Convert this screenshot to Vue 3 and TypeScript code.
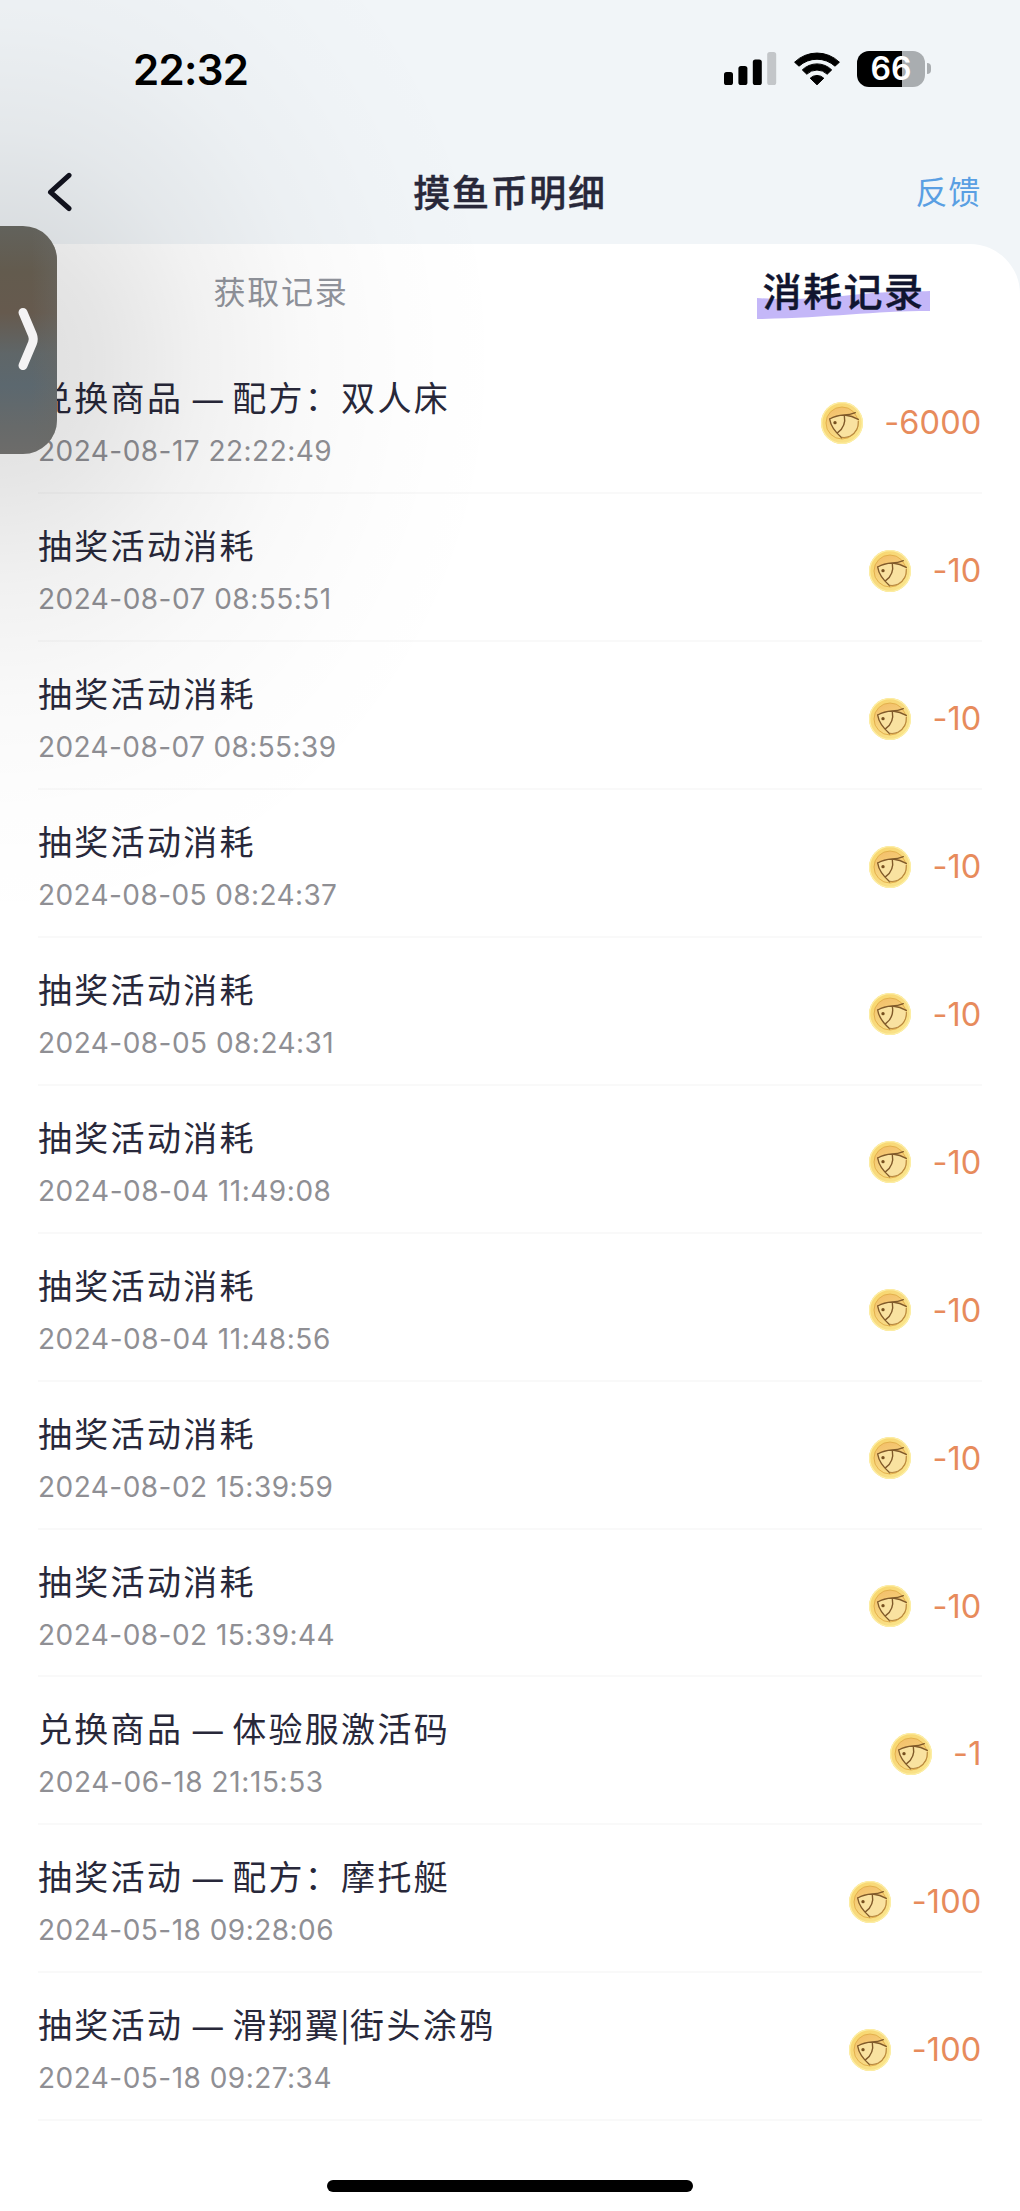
<script setup lang="ts">
interface Part {
  text: string
  kind: 'text' | 'dash' | 'bar'
}
interface Entry {
  parts: Part[]
  time: string
  tracking: string
  amount: string
}

const split = (title: string): Part[] =>
  title
    .split(/( — |\|)/)
    .map((text) => ({ text, kind: text === ' — ' ? 'dash' : text === '|' ? 'bar' : 'text' }))

// Narrow "1" glyphs get a little more tracking so the timestamps keep an even width.
const tracking = (time: string): string =>
  `${(0.4 + 0.07 * (time.split('1').length - 1)).toFixed(2)}px`

const entry = (title: string, time: string, amount: string): Entry => ({
  parts: split(title),
  time,
  tracking: tracking(time),
  amount,
})

const entries: Entry[] = [
  entry('兑换商品 — 配方：双人床', '2024-08-17 22:22:49', '-6000'),
  entry('抽奖活动消耗', '2024-08-07 08:55:51', '-10'),
  entry('抽奖活动消耗', '2024-08-07 08:55:39', '-10'),
  entry('抽奖活动消耗', '2024-08-05 08:24:37', '-10'),
  entry('抽奖活动消耗', '2024-08-05 08:24:31', '-10'),
  entry('抽奖活动消耗', '2024-08-04 11:49:08', '-10'),
  entry('抽奖活动消耗', '2024-08-04 11:48:56', '-10'),
  entry('抽奖活动消耗', '2024-08-02 15:39:59', '-10'),
  entry('抽奖活动消耗', '2024-08-02 15:39:44', '-10'),
  entry('兑换商品 — 体验服激活码', '2024-06-18 21:15:53', '-1'),
  entry('抽奖活动 — 配方：摩托艇', '2024-05-18 09:28:06', '-100'),
  entry('抽奖活动 — 滑翔翼|街头涂鸦', '2024-05-18 09:27:34', '-100'),
]
</script>

<template>
  <div class="screen">
    <header class="status">
      <span class="clock">22:32</span>
      <div class="indicators">
        <svg class="signal" width="53" height="34" viewBox="0 0 53 34">
          <rect x="0" y="20" width="9" height="13" rx="2.6" />
          <rect x="14.4" y="14" width="9" height="19" rx="2.6" />
          <rect x="28.8" y="7.5" width="9" height="25.5" rx="2.6" />
          <rect x="43.2" y="0" width="9" height="33" rx="2.6" fill="#c3c6c9" />
        </svg>
        <svg class="wifi" width="46" height="34" viewBox="0 0 46 34">
          <path d="M0.600 10.200A32 32 0 0 1 45.400 10.200L41 14.200A26.700 26.700 0 0 0 5 14.200Z" stroke="#000" stroke-width="1" stroke-linejoin="round" />
          <path d="M8.300 17.900A21 21 0 0 1 37.700 17.900L33.200 22.200A14.600 14.600 0 0 0 12.800 22.200Z" stroke="#000" stroke-width="1" stroke-linejoin="round" />
          <path d="M16.200 26.200A9.800 9.800 0 0 1 29.800 26.200L23 32.800Z" stroke="#000" stroke-width="1" stroke-linejoin="round" />
        </svg>
        <div class="battery">
          <div class="cell">66</div>
          <i class="nub"></i>
        </div>
      </div>
    </header>

    <nav class="nav">
      <svg class="back" width="26" height="42" viewBox="0 0 26 42">
        <path d="M23 4.300 4.500 21.200 23 37.500" fill="none" stroke="#12131f" stroke-width="5" stroke-linecap="round" stroke-linejoin="round" />
      </svg>
      <h1 class="heading">摸鱼币明细</h1>
      <a class="feedback">反馈</a>
    </nav>

    <main class="panel">
      <div class="tabs">
        <div class="tab"><span>获取记录</span></div>
        <div class="tab active">
          <span class="label">
            <svg class="marker" width="173" height="30" viewBox="0 0 173 30">
              <path d="M0 8C40 11 75 7 105 4S150 2 173 1V21C115 21 70 28 0 29Z" fill="#c4b7f8" />
            </svg>
            <span class="word">消耗记录</span>
          </span>
        </div>
      </div>

      <ul class="list">
        <li v-for="(item, i) in entries" :key="i" class="row">
          <div class="info">
            <p class="title"><span v-for="(part, n) in item.parts" :key="n" :class="part.kind">{{ part.text }}</span></p>
            <p class="time" :style="{ letterSpacing: item.tracking }">{{ item.time }}</p>
          </div>
          <div class="cost">
            <svg class="coin" width="44" height="44" viewBox="0 0 132 132">
              <defs>
                <linearGradient id="rim" x1="0" y1="0" x2="1" y2="1">
                  <stop offset="0" stop-color="#f9d769" />
                  <stop offset="0.5" stop-color="#f8da80" />
                  <stop offset="1" stop-color="#fbe88c" />
                </linearGradient>
                <linearGradient id="face" x1="0" y1="0" x2="0.3" y2="1">
                  <stop offset="0" stop-color="#f3bd68" />
                  <stop offset="1" stop-color="#f8dc86" />
                </linearGradient>
              </defs>
              <circle cx="66" cy="66" r="63" fill="url(#rim)" />
              <circle cx="66" cy="66" r="61" fill="none" stroke="#fdefa6" stroke-width="4" />
              <circle cx="66" cy="66" r="48" fill="url(#face)" stroke="#e3b04c" stroke-width="3" />
              <path d="M29 54Q50 43 72 43Q98 42 114 58Q116 88 90 106Q77 112 62 108Q34 80 29 54Z" fill="#f9e2a0" />
              <path d="M29 54Q48 43 72 42Q90 42 106 35M74 42Q96 44 115 55M29 54Q33 82 65 110M73 43Q79 76 53 95" fill="none" stroke="#805a2a" stroke-width="4.200" stroke-linecap="round" stroke-linejoin="round" />
              <path d="M115 60Q117 90 91 105Q78 111 66 109" fill="none" stroke="#b98a42" stroke-width="3.500" stroke-linecap="round" />
              <circle cx="45" cy="65" r="5" fill="#76501f" />
            </svg>
            <span class="amount">{{ item.amount }}</span>
          </div>
        </li>
      </ul>
    </main>

    <div class="shade"></div>
    <div class="drawer">
      <svg width="24" height="68" viewBox="0 0 24 68">
        <path d="M6 6.500 15.500 29Q17 33 15.500 37L6 59.500" fill="none" stroke="#f4f3f4" stroke-width="9" stroke-linecap="round" stroke-linejoin="round" />
      </svg>
    </div>
    <div class="home"></div>
  </div>
</template>

<style>
body {
  margin: 0;
}
</style>

<style scoped>
.screen {
  position: relative;
  width: 1020px;
  height: 2211px;
  overflow: hidden;
  background: #f1f5f8;
  font-family: Inter, 'Noto Sans CJK SC', sans-serif;
  color: #28283a;
}
.status {
  display: flex;
  justify-content: space-between;
  align-items: center;
  height: 137px;
  padding: 0 89px 0 133px;
  box-sizing: border-box;
}
.clock {
  font-size: 42px;
  font-weight: 600;
  letter-spacing: -0.700px;
  color: #000;
  padding-top: 1px;
}
.indicators {
  display: flex;
  align-items: center;
}
.signal {
  margin-right: 17px;
}
.wifi {
  margin-right: 17px;
}
.battery {
  display: flex;
  align-items: center;
  gap: 2px;
}
.cell {
  width: 68px;
  height: 36px;
  border-radius: 12px;
  background: linear-gradient(90deg, #000 0 44.500px, #a9adb0 44.500px);
  color: #fff;
  font-size: 32px;
  font-weight: 600;
  line-height: 36px;
  text-align: center;
}
.nub {
  width: 4px;
  height: 11px;
  border-radius: 0 5px 5px 0;
  background: #a9adb0;
}
.nav {
  display: grid;
  grid-template-columns: 200px 1fr 200px;
  align-items: center;
  height: 107px;
  padding: 2px 39px 0 46px;
  box-sizing: border-box;
}
.heading {
  margin: 0 7px 0 0;
  padding-top: 4px;
  text-align: center;
  font-size: 37px;
  font-weight: 500;
  letter-spacing: 1.700px;
  line-height: 50px;
  -webkit-text-stroke: 0.400px currentColor;
}
.feedback {
  padding-bottom: 3px;
  text-align: right;
  font-size: 32px;
  letter-spacing: 0.700px;
  color: #5a9fe3;
}
.panel {
  height: 1967px;
  background: #fff;
  border-radius: 0 50px 0 0;
}
.tabs {
  display: grid;
  grid-template-columns: 562px 1fr;
  height: 102.400px;
}
.tab {
  height: 92px;
  display: flex;
  align-items: center;
  justify-content: center;
  font-size: 32px;
  letter-spacing: 1.700px;
  color: #91949c;
}
.active {
  height: 90px;
  padding-left: 105px;
  font-size: 39px;
  font-weight: 500;
  letter-spacing: 1.500px;
  color: #101530;
  -webkit-text-stroke: 0.400px currentColor;
}
.label {
  position: relative;
}
.marker {
  position: absolute;
  left: -5px;
  bottom: -3px;
}
.word {
  position: relative;
}
.list {
  margin: 0;
  padding: 0 38px;
  list-style: none;
}
.row {
  display: flex;
  justify-content: space-between;
  height: 147.900px;
  box-sizing: border-box;
  border-bottom: 2px solid rgba(30, 30, 50, 0.026);
}
.info {
  padding-top: 28px;
}
.title {
  height: 50px;
  margin: 0;
  font-size: 34px;
  line-height: 50px;
  letter-spacing: 2.300px;
  white-space: pre;
}
.dash {
  display: inline-block;
  width: 49px;
  font-size: 30px;
  text-align: center;
  letter-spacing: 0;
}
.bar {
  display: inline-block;
  width: 9px;
  font-size: 29px;
  text-indent: -1px;
  letter-spacing: 0;
}
.time {
  margin: 9px 0 0;
  font-size: 28px;
  line-height: 36px;
  color: #8f8f94;
}
.cost {
  display: flex;
  align-items: center;
  height: 153px;
}
.coin {
  margin-right: 20px;
}
.amount {
  margin-right: 0.500px;
  font-size: 32.500px;
  letter-spacing: 0.150px;
  color: #e78b5c;
}
.shade {
  position: absolute;
  inset: 0;
  background: radial-gradient(
    510px 570px at 0 360px,
    rgba(0, 0, 0, 0.135),
    rgba(0, 0, 0, 0.1) 20%,
    rgba(0, 0, 0, 0.053) 40%,
    rgba(0, 0, 0, 0.022) 60%,
    rgba(0, 0, 0, 0.007) 80%,
    transparent
  );
}
.drawer {
  position: absolute;
  left: 0;
  top: 226px;
  width: 57px;
  height: 228px;
  display: flex;
  align-items: center;
  padding-left: 17px;
  box-sizing: border-box;
  border-radius: 0 34px 34px 0;
  background: linear-gradient(#62625c, #635b4e 20%, #665a4e 38%, #5f6668 56%, #5c686f 70%, #676a6a 88%, #6d6c6a);
}
.drawer::after {
  content: '';
  position: absolute;
  inset: 0;
  border-radius: inherit;
  background: linear-gradient(90deg, transparent 55%, rgba(106, 106, 102, 0.45));
}
.drawer svg {
  position: relative;
  z-index: 1;
}
.home {
  position: absolute;
  left: 327px;
  top: 2180px;
  width: 366px;
  height: 12px;
  border-radius: 6px;
  background: #000;
}
</style>
